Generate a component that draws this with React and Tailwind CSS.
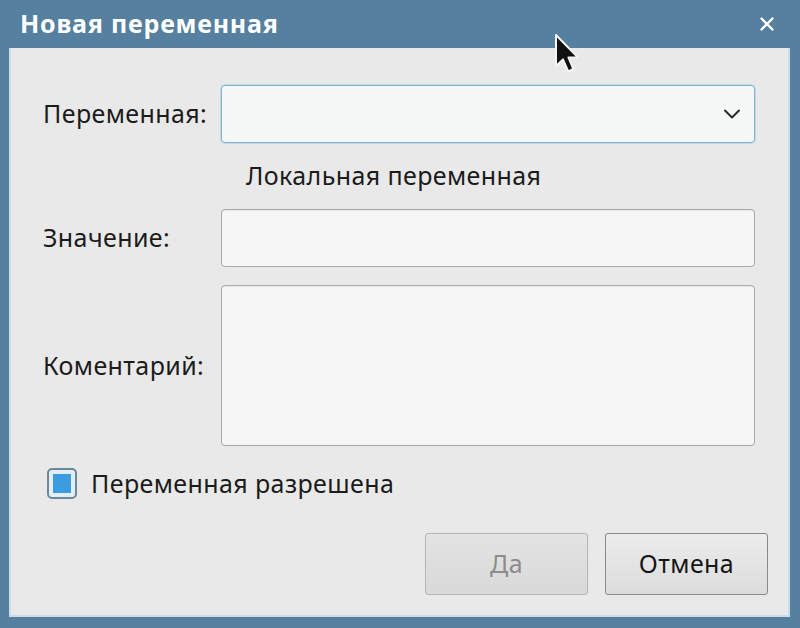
import { ChevronDown, X } from 'lucide-react'

const font = { fontFamily: '"Noto Sans", "Open Sans", sans-serif' }

function Field({ className = '' }) {
  return (
    <div className={`rounded-[4px] border border-[#a9a9a9] bg-[#f6f6f6] shadow-[inset_0_1px_1px_rgba(0,0,0,0.06)] ${className}`} />
  )
}

function Cursor() {
  return (
    <svg className="absolute left-[553px] top-[33px]" width="30" height="42" viewBox="0 0 15 21">
      <path
        d="M1.5 1 L1.5 16.5 L5 13.2 L7.6 19.2 L10.2 18 L7.7 12.2 L12.4 12.2 Z"
        fill="#111"
        stroke="#f4f4f4"
        strokeWidth="1"
        strokeLinejoin="round"
      />
    </svg>
  )
}

export default function App() {
  return (
    <div className="relative w-[800px] h-[628px] bg-[#56809f] flex flex-col" style={font}>
      {/* Title bar */}
      <div className="h-[48px] flex items-center justify-between pl-[20px] pr-[22px] shrink-0">
        <span className="text-white text-[25px] font-bold tracking-[0.8px]">Новая переменная</span>
        <X className="w-[22px] h-[22px] text-white" strokeWidth={2.6} />
      </div>

      {/* Body */}
      <div className="mx-[9px] w-[781px] h-[569px] bg-[#e9e9e9] border-l-2 border-r-2 border-b-2 border-[#c9dcea] pl-[32px] pr-[33px] pt-[37px] flex flex-col text-[#1b1b1b] text-[25px] tracking-[0.4px]">
        <div className="grid grid-cols-[178px_534px]">
          <div className="h-[58px] flex items-center">Переменная:</div>
          <div className="h-[58px] rounded-[4px] border border-[#7fb3d5] bg-[#f6f7f7] flex items-center justify-end pr-[8px] shadow-[0_0_0_1px_rgba(140,190,225,0.35)]">
            <ChevronDown className="w-[28px] h-[28px] text-[#2a2a2a]" strokeWidth={1.7} />
          </div>

          <div />
          <div className="h-[66px] flex items-center pl-[25px]">Локальная переменная</div>

          <div className="h-[58px] flex items-center">Значение:</div>
          <Field className="h-[58px]" />

          <div className="h-[18px]" />
          <div className="h-[18px]" />

          <div className="h-[161px] flex items-center">Коментарий:</div>
          <Field className="h-[161px]" />
        </div>

        {/* Checkbox */}
        <div className="mt-[22px] ml-[4px] h-[31px] flex items-center gap-[14px]">
          <div className="w-[30px] h-[31px] rounded-[5px] border-2 border-[#6f8798] bg-[#e2eff7] flex items-center justify-center">
            <div className="w-[18px] h-[19px] bg-[#3d9be0]" />
          </div>
          <span className="leading-[31px]">Переменная разрешена</span>
        </div>

        {/* Buttons */}
        <div className="mt-[34px] -mr-[13px] flex justify-end gap-[17px]">
          <button className="w-[163px] h-[62px] rounded-[3px] border border-[#b4b4b4] bg-gradient-to-b from-[#e3e3e3] to-[#d9d9d9] text-[#8c8c8c]">
            Да
          </button>
          <button className="w-[163px] h-[62px] rounded-[3px] border border-[#8a8a8a] bg-gradient-to-b from-[#ececec] to-[#dcdcdc] text-[#161616]">
            Отмена
          </button>
        </div>
      </div>

      <Cursor />
    </div>
  )
}
